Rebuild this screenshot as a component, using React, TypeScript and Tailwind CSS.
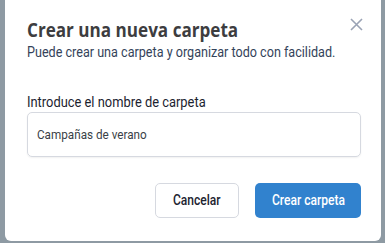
export default function App() {
  return (
    <div className="w-[385px] h-[243px] bg-[#8e9aa3] overflow-hidden">
      <div className="relative ml-[5px] w-[376px] h-[241px] bg-white rounded-b-[6px] pl-[22px] pr-[20px] font-['Roboto',sans-serif]">
        {/* Close */}
        <button className="absolute left-[340px] top-[13px] w-[22px] h-[22px] flex items-center justify-center text-[#9aa3b5]">
          <svg width="13" height="13" viewBox="0 0 13 13" fill="none" stroke="currentColor" strokeWidth="1.6">
            <path d="M1 1 L12 12 M12 1 L1 12" />
          </svg>
        </button>

        {/* Header */}
        <div className="pt-[18px]">
          <h2 className="text-[19px] leading-[24px] font-bold text-[#3d3d3f] font-['Open_Sans',sans-serif] whitespace-nowrap">
            <span className="inline-block scale-x-[0.9] origin-left">Crear una nueva carpeta</span>
          </h2>
          <p className="mt-[1px] text-[14px] leading-[18px] text-[#34435a] whitespace-nowrap">
            <span className="inline-block scale-x-[0.9] origin-left">
              Puede crear una carpeta y organizar todo con facilidad.
            </span>
          </p>
        </div>

        {/* Field */}
        <div className="mt-[32px]">
          <label className="block text-[14px] leading-[18px] text-[#1c2330] whitespace-nowrap">
            <span className="inline-block scale-x-[0.92] origin-left">Introduce el nombre de carpeta</span>
          </label>
          <div className="mt-[1px] w-full h-[45px] px-[9px] flex items-center rounded-[5px] border border-[#d6d9e0] shadow-[0_1px_2px_rgba(0,0,0,0.06)] text-[13px] text-[#3a3f47]">
            <span className="inline-block scale-x-[0.9] origin-left whitespace-nowrap">Campañas de verano</span>
          </div>
        </div>

        {/* Actions */}
        <div className="mt-[26px] flex justify-end gap-[16px]">
          <button className="w-[84px] h-[35px] rounded-[5px] border border-[#d6d9e0] bg-white text-[14px] font-medium text-[#1c2330] flex items-center justify-center">
            <span className="inline-block scale-x-[0.86]">Cancelar</span>
          </button>
          <button className="w-[106px] h-[35px] rounded-[5px] bg-[#3182ce] text-[14px] font-medium text-white flex items-center justify-center">
            <span className="inline-block scale-x-[0.86]">Crear carpeta</span>
          </button>
        </div>
      </div>
    </div>
  );
}
